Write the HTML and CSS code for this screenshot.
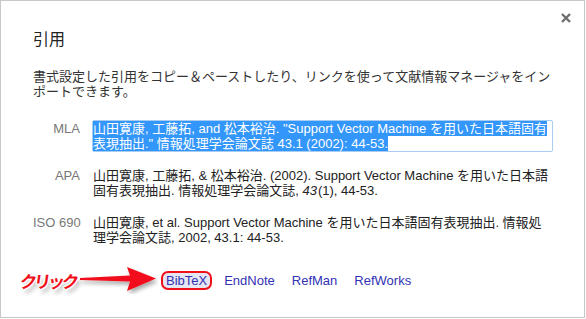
FILE: index.html
```html
<!DOCTYPE html>
<html lang="ja">
<head>
  <meta charset="UTF-8">
  <title>引用</title>
  <link rel="stylesheet" href="styles.css">
</head>
<body>
  <div class="dialog">
    <button class="close" aria-label="閉じる">
      <svg width="10" height="10" viewBox="0 0 10 10"><path d="M1 1L9 9M9 1L1 9" stroke="#6f6f6f" stroke-width="2.4"/></svg>
    </button>
    <h2 class="title">引用</h2>
    <p class="intro">書式設定した引用をコピー＆ペーストしたり、リンクを使って文献情報マネージャをインポートできます。</p>

    <div class="cites">
      <div class="label">MLA</div>
      <div class="cite selected"><span class="sel">山田寛康, 工藤拓, and 松本裕治. "Support Vector Machine を用いた日本語固有表現抽出." 情報処理学会論文誌 43.1 (2002): 44-53.</span></div>

      <div class="label">APA</div>
      <div class="cite">山田寛康, 工藤拓, &amp; 松本裕治. (2002). Support Vector Machine を用いた日本語固有表現抽出. 情報処理学会論文誌, <i>43</i>(1), 44-53.</div>

      <div class="label">ISO 690</div>
      <div class="cite">山田寛康, et al. Support Vector Machine を用いた日本語固有表現抽出. 情報処理学会論文誌, 2002, 43.1: 44-53.</div>
    </div>

    <div class="links">
      <div class="callout">
        <span class="click">クリック</span>
        <svg class="arrow" width="78" height="28" viewBox="0 0 78 28">
          <defs>
            <filter id="sh" x="-10%" y="-30%" width="130%" height="180%">
              <feDropShadow dx="2" dy="3" stdDeviation="2" flood-color="#000" flood-opacity="0.35"/>
            </filter>
          </defs>
          <polygon points="0,12 50,9.5 47,1 76,12.5 47,25 50,15.5 0,14" fill="#f2101a" filter="url(#sh)"/>
        </svg>
      </div>
      <a href="#" class="link marked">BibTeX</a>
      <a href="#" class="link">EndNote</a>
      <a href="#" class="link">RefMan</a>
      <a href="#" class="link">RefWorks</a>
    </div>
  </div>
</body>
</html>
```

FILE: styles.css
```css
* {
  box-sizing: border-box;
}

body {
  margin: 0;
  background: #fff;
  font-family: "Liberation Sans", Arial, "Noto Sans CJK JP", sans-serif;
  color: #222;
}

.dialog {
  position: relative;
  width: 585px;
  height: 318px;
  border: 1px solid #c8c8c8;
  padding: 29px 27px 0 32px;
}

.close {
  position: absolute;
  top: 12px;
  right: 13px;
  padding: 0;
  border: none;
  background: none;
  line-height: 0;
}

.title {
  margin: 0 0 19px;
  font-size: 16px;
  font-weight: normal;
  line-height: 20px;
  color: #222;
}

.intro {
  margin: 0 0 22px;
  font-size: 13px;
  line-height: 15px;
  color: #333;
}

.cites {
  display: grid;
  grid-template-columns: 47px 460px;
  column-gap: 13px;
  row-gap: 17px;
  font-size: 13px;
  line-height: 15px;
}

.label {
  white-space: nowrap;
  text-align: right;
  color: #777;
}

.cite {
  color: #222;
}

.cite i {
  padding-right: 1px;
}

.cite.selected {
  margin: -1px 0 -1px -1px;
  border: 1px solid #a9cdf2;
  border-radius: 2px;
}

.sel {
  background: #3296fb;
  color: #fff;
}

.links {
  display: flex;
  align-items: center;
  height: 24px;
  margin: 23px 0 0 -13px;
  gap: 17px;
  font-size: 13px;
  line-height: 13px;
}

.callout {
  display: flex;
  align-items: center;
  justify-content: space-between;
  width: 141px;
  margin-right: -17px;
  padding-right: 3px;
}

.click {
  font-family: "Noto Sans CJK JP", sans-serif;
  font-weight: bold;
  font-size: 17px;
  letter-spacing: -3px;
  color: #f0101a;
  transform: skewX(-8deg);
  text-shadow:
    1px 0 0 #fff, -1px 0 0 #fff, 0 1px 0 #fff, 0 -1px 0 #fff,
    1px 1px 0 #fff, -1px -1px 0 #fff, 1px -1px 0 #fff, -1px 1px 0 #fff,
    3px 4px 4px rgba(0, 0, 0, 0.35);
}

.arrow {
  display: block;
}

.link {
  color: #3232b4;
  text-decoration: none;
}

.link.marked {
  margin-right: -5px;
  padding: 1px 3px;
  border: 2px solid #f0101a;
  border-radius: 7px;
  background: #e6e6f2;
}
```
